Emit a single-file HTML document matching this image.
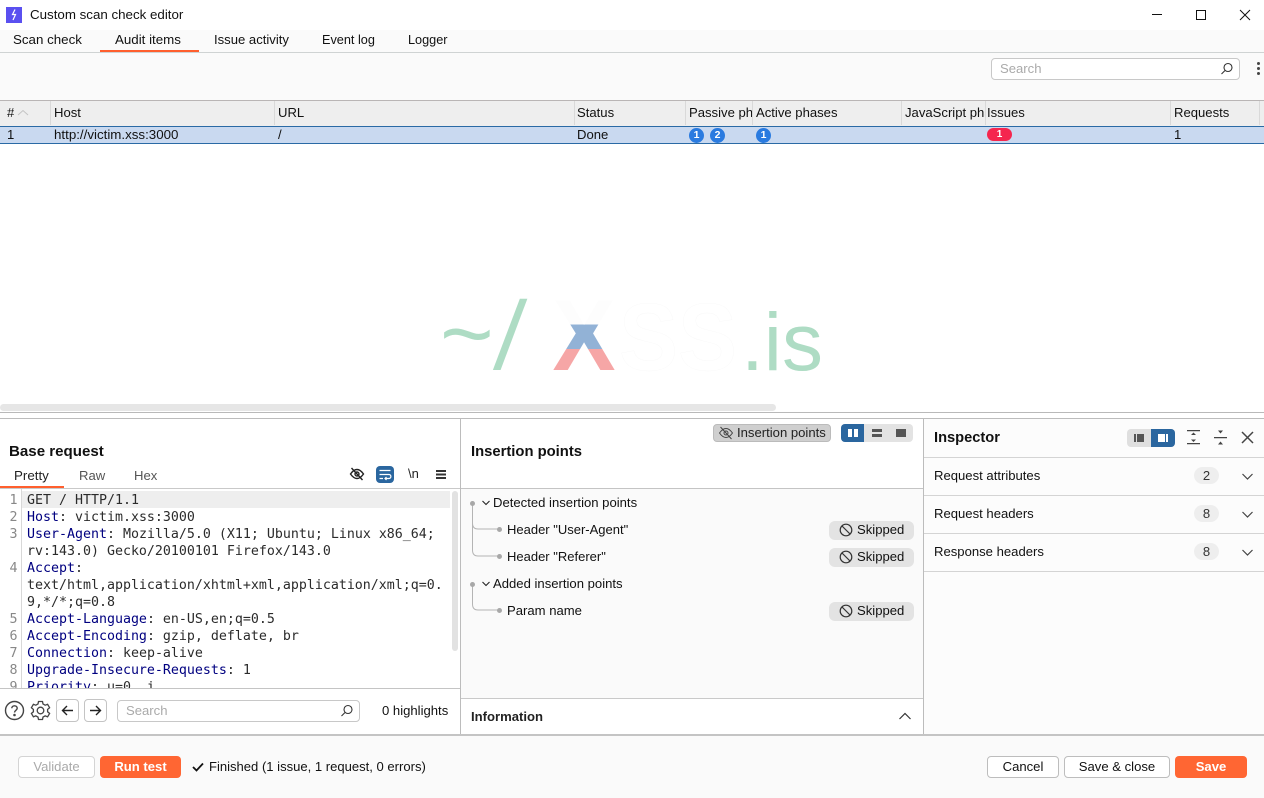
<!DOCTYPE html>
<html><head><meta charset="utf-8"><style>
html,body{margin:0;padding:0;width:1264px;height:798px;overflow:hidden;background:#fff}
body{position:relative;font-family:"Liberation Sans",sans-serif;font-size:13.1px;color:#111}
.a{position:absolute}
.t{position:absolute;white-space:nowrap;line-height:16px}
.r{position:absolute}
.m{position:absolute;white-space:pre;font-family:"DejaVu Sans Mono",monospace;font-size:13.3px;line-height:17px;color:#2b2b2b;left:27px;letter-spacing:-.01px}
.m b{font-weight:normal;color:#000080}
.n{position:absolute;left:0;width:17.500px;text-align:right;font-family:"DejaVu Sans Mono",monospace;font-size:13.33px;line-height:17px;color:#888}
.h{position:absolute;top:105px;white-space:nowrap;line-height:16px;overflow:hidden}
.sep{position:absolute;top:101px;width:1px;height:24px;background:#d9d9d9}
.dot{position:absolute;width:15px;height:15px;border-radius:50%;background:#2a7be0;color:#fff;font-size:10.5px;font-weight:bold;text-align:center;line-height:15px;top:128px}
.btn{position:absolute;box-sizing:border-box;border:1px solid #bdbdbd;border-radius:4px;background:#fff;text-align:center;height:22px;line-height:20px;top:756px}
.or{background:#ff6633;border:0;color:#fff;font-weight:bold;line-height:22px}
.sk{position:absolute;left:829px;width:85px;height:19px;border-radius:6px;background:#e3e3e3}
.sk span{position:absolute;left:28px;top:1px;line-height:16px}
.sk svg{position:absolute;left:10px;top:2px}
.dt{position:absolute;width:5px;height:5px;border-radius:50%;background:#a8a8a8}
.pill{position:absolute;left:1194px;width:25px;height:17px;border-radius:9px;background:#eeeeee;text-align:center;line-height:17px;color:#333}
</style></head><body>
<!-- title bar -->
<div class="r" style="left:6px;top:7px;width:16px;height:16px;background:#5a50f0"></div>
<svg class="a" style="left:6px;top:7px" width="16" height="16"><path d="M9 2.500L6.500 7.500H9.500L7 13" fill="none" stroke="#fff" stroke-width="1.200"/></svg>
<div class="t" style="left:30px;top:7px;font-size:13.33px">Custom scan check editor</div>
<svg class="a" style="left:1150px;top:8px" width="104" height="14" fill="none" stroke="#111" stroke-width="1"><path d="M2 6.500H12"/><rect x="46.500" y="2.500" width="9" height="9"/><path d="M90 2L100 12M100 2L90 12"/></svg>
<!-- tabs -->
<div class="r" style="left:0;top:30px;width:1264px;height:22px;background:#fafafa"></div>
<div class="r" style="left:0;top:52px;width:1264px;height:1px;background:#cfd3d3"></div>
<div class="t" style="left:13px;top:32px;font-size:13.33px">Scan check</div>
<div class="t" style="left:115px;top:32px;font-size:13.33px">Audit items</div>
<div class="t" style="left:214px;top:32px">Issue activity</div>
<div class="t" style="left:322px;top:32px;font-size:12.700px">Event log</div>
<div class="t" style="left:408px;top:32px;font-size:12.700px">Logger</div>
<div class="r" style="left:100px;top:50px;width:99px;height:2px;background:#ff5f2e"></div>
<!-- toolbar -->
<div class="r" style="left:0;top:53px;width:1264px;height:47px;background:#fafafa"></div>
<div class="r" style="left:991px;top:58px;width:249px;height:22px;box-sizing:border-box;border:1px solid #c8c8c8;border-radius:4px;background:#fff"></div>
<div class="t" style="left:1000px;top:61px;color:#aaa">Search</div>
<svg class="a" style="left:1219px;top:61px" width="16" height="16" fill="none" stroke="#333" stroke-width="1.100"><circle cx="9" cy="6.500" r="4"/><path d="M6 9.500L2.500 13"/></svg>
<div class="r" style="left:1257px;top:62px;width:3px;height:3px;border-radius:2px;background:#444;box-shadow:0 5px 0 #444,0 10px 0 #444"></div>
<!-- table header -->
<div class="r" style="left:0;top:100px;width:1264px;height:26px;box-sizing:border-box;background:#eeeeee;border-top:1px solid #b9b5b5"></div>
<div class="sep" style="left:50px"></div><div class="sep" style="left:274px"></div><div class="sep" style="left:574px"></div><div class="sep" style="left:685px"></div><div class="sep" style="left:752px"></div><div class="sep" style="left:901px"></div><div class="sep" style="left:985px"></div><div class="sep" style="left:1170px"></div><div class="sep" style="left:1259px"></div>
<div class="h" style="left:7px">#</div>
<svg class="a" style="left:17px;top:109px" width="12" height="8" fill="none" stroke="#c4c4c4" stroke-width="1"><path d="M1 6L6 1.500L11 6"/></svg>
<div class="h" style="left:54px">Host</div>
<div class="h" style="left:278px">URL</div>
<div class="h" style="left:577px">Status</div>
<div class="h" style="left:689px;width:63px">Passive phases</div>
<div class="h" style="left:756px">Active phases</div>
<div class="h" style="left:905px;width:80px">JavaScript phases</div>
<div class="h" style="left:987px">Issues</div>
<div class="h" style="left:1174px">Requests</div>
<!-- row -->
<div class="r" style="left:0;top:126px;width:1264px;height:18px;box-sizing:border-box;background:#c9d9f0;border-top:1px solid #2a6aa5;border-bottom:1px solid #2a6aa5"></div>
<div class="t" style="left:7px;top:127px">1</div>
<div class="t" style="left:54px;top:127px;font-size:13.33px">http://victim.xss:3000</div>
<div class="t" style="left:278px;top:127px">/</div>
<div class="t" style="left:577px;top:127px">Done</div>
<div class="dot" style="left:689px">1</div><div class="dot" style="left:710px">2</div><div class="dot" style="left:756px">1</div>
<div class="r" style="left:987px;top:128px;width:25px;height:13px;border-radius:7px;background:#f5264e;color:#fff;font-size:10px;font-weight:bold;text-align:center;line-height:13px">1</div>
<div class="t" style="left:1174px;top:127px">1</div>
<!-- logo -->
<svg class="a" style="left:420px;top:280px" width="420" height="110">
<defs><linearGradient id="g" gradientUnits="userSpaceOnUse" x1="0" y1="20" x2="0" y2="90">
<stop offset="0" stop-color="#fdfdfd"/><stop offset=".347" stop-color="#fdfdfd"/><stop offset=".347" stop-color="#92b2d6"/><stop offset=".7" stop-color="#92b2d6"/><stop offset=".7" stop-color="#f6a6a6"/><stop offset="1" stop-color="#f6a6a6"/></linearGradient></defs>
<text x="20" y="85" font-family="Liberation Sans" font-size="92" fill="#aedcc4">~</text>
<text transform="translate(73,89) skewX(-6)" font-family="Liberation Sans" font-size="97" fill="#aedcc4">/</text>
<text x="132.500" y="90" font-family="Liberation Sans" font-weight="bold" font-size="101" fill="url(#g)" textLength="63" lengthAdjust="spacingAndGlyphs">X</text>
<text x="199" y="90" font-family="Liberation Sans" font-weight="bold" font-size="96" fill="#fff" stroke="#f8f8f8" stroke-width=".4" textLength="118" lengthAdjust="spacingAndGlyphs">SS</text>
<text x="321" y="90" font-family="Liberation Sans" font-size="82" fill="#aedcc4">.is</text>
</svg>
<!-- hscroll -->
<div class="r" style="left:0;top:404px;width:776px;height:7px;border-radius:4px;background:#e6e6e6"></div>
<div class="r" style="left:0;top:412px;width:1264px;height:1px;background:#b9b9b9"></div>
<div class="r" style="left:0;top:418px;width:1264px;height:1px;background:#bcbcbc"></div>
<!-- left panel -->
<div class="t" style="left:9px;top:444px;font-weight:bold;font-size:15.100px">Base request</div>
<div class="t" style="left:14px;top:468px;color:#222;font-size:13.33px">Pretty</div>
<div class="t" style="left:79px;top:468px;color:#555">Raw</div>
<div class="t" style="left:134px;top:468px;color:#555">Hex</div>
<div class="r" style="left:0;top:486px;width:64px;height:2px;background:#ff5f2e"></div>
<div class="r" style="left:0;top:488px;width:460px;height:1px;background:#c9c9c9"></div>
<svg class="a" style="left:349px;top:466px" width="16" height="16" fill="none" stroke="#222" stroke-width="1.400"><path d="M1.500 8C4 4.500 6 3.500 8 3.500S12 4.500 14.500 8C12 11.500 10 12.500 8 12.500S4 11.500 1.500 8Z"/><circle cx="8" cy="8" r="2"/><path d="M2.500 2L13.500 14"/></svg>
<div class="r" style="left:376px;top:466px;width:18px;height:17px;border-radius:4px;background:#2a669f"></div>
<svg class="a" style="left:376px;top:466px" width="18" height="17" fill="none" stroke="#fff" stroke-width="1.200"><path d="M3.500 4.500H14.500M3.500 8.500H13C15.500 8.500 15.500 12.500 13 12.500H9M10.500 11L9 12.500L10.500 14M3.500 12.500H7"/></svg>
<div class="t" style="left:408px;top:466px;font-size:13px;color:#222">\n</div>
<div class="r" style="left:436px;top:470px;width:10px;height:2px;background:#333;box-shadow:0 3.500px 0 #333,0 7px 0 #333"></div>
<!-- editor -->
<div class="r" style="left:0;top:489px;width:460px;height:199px;overflow:hidden">
<div class="r" style="left:21px;top:0;width:1px;height:199px;background:#d8d8d8"></div>
<div class="r" style="left:22px;top:2px;width:428px;height:17px;background:#eeeeee"></div>
<div class="r" style="left:452px;top:2px;width:6px;height:160px;border-radius:3px;background:#e2e2e2"></div>
<div class="n" style="top:3px">1</div><div class="n" style="top:20px">2</div><div class="n" style="top:37px">3</div><div class="n" style="top:71px">4</div><div class="n" style="top:122px">5</div><div class="n" style="top:139px">6</div><div class="n" style="top:156px">7</div><div class="n" style="top:173px">8</div><div class="n" style="top:190px">9</div>
<div class="m" style="top:3px">GET / HTTP/1.1</div>
<div class="m" style="top:20px"><b>Host</b>: victim.xss:3000</div>
<div class="m" style="top:37px"><b>User-Agent</b>: Mozilla/5.0 (X11; Ubuntu; Linux x86_64;</div>
<div class="m" style="top:54px">rv:143.0) Gecko/20100101 Firefox/143.0</div>
<div class="m" style="top:71px"><b>Accept</b>:</div>
<div class="m" style="top:88px">text/html,application/xhtml+xml,application/xml;q=0.</div>
<div class="m" style="top:105px">9,*/*;q=0.8</div>
<div class="m" style="top:122px"><b>Accept-Language</b>: en-US,en;q=0.5</div>
<div class="m" style="top:139px"><b>Accept-Encoding</b>: gzip, deflate, br</div>
<div class="m" style="top:156px"><b>Connection</b>: keep-alive</div>
<div class="m" style="top:173px"><b>Upgrade-Insecure-Requests</b>: 1</div>
<div class="m" style="top:190px"><b>Priority</b>: u=0, i</div>
</div>
<div class="r" style="left:0;top:688px;width:460px;height:1px;background:#c4c4c4"></div>
<svg class="a" style="left:4px;top:700px" width="21" height="21" fill="none" stroke="#444" stroke-width="1.400"><circle cx="10.500" cy="10.500" r="9"/><path d="M7.800 8.300C7.800 5 13.200 5 13.200 8.300C13.200 10.300 10.500 10.300 10.500 12.500"/><circle cx="10.500" cy="15" r=".6" fill="#444"/></svg>
<svg class="a" style="left:30px;top:700px" width="21" height="21" fill="none" stroke="#444" stroke-width="1.300"><path d="M8.500 1.500H12.500L13 4L15.200 5.200L17.600 4.300L19.600 7.700L17.600 9.400V11.800L19.600 13.400L17.600 16.800L15.200 15.900L13 17.100L12.500 19.500H8.500L8 17.100L5.800 15.900L3.400 16.800L1.400 13.400L3.400 11.800V9.400L1.400 7.700L3.400 4.300L5.800 5.200L8 4Z"/><circle cx="10.500" cy="10.500" r="3.300"/></svg>
<div class="r" style="left:56px;top:699px;width:23px;height:23px;box-sizing:border-box;border:1px solid #c4c4c4;border-radius:4px"></div>
<svg class="a" style="left:56px;top:699px" width="23" height="23" fill="none" stroke="#222" stroke-width="1.400"><path d="M17 11.500H6.500M11 7L6.500 11.500L11 16"/></svg>
<div class="r" style="left:84px;top:699px;width:23px;height:23px;box-sizing:border-box;border:1px solid #c4c4c4;border-radius:4px"></div>
<svg class="a" style="left:84px;top:699px" width="23" height="23" fill="none" stroke="#222" stroke-width="1.400"><path d="M6 11.500H16.500M12 7L16.500 11.500L12 16"/></svg>
<div class="r" style="left:117px;top:700px;width:243px;height:22px;box-sizing:border-box;border:1px solid #c8c8c8;border-radius:4px;background:#fff"></div>
<div class="t" style="left:126px;top:703px;color:#aaa">Search</div>
<svg class="a" style="left:339px;top:703px" width="16" height="16" fill="none" stroke="#333" stroke-width="1.100"><circle cx="9" cy="6.500" r="4"/><path d="M6 9.500L2.500 13"/></svg>
<div class="t" style="left:382px;top:703px">0 highlights</div>
<!-- mid panel -->
<div class="r" style="left:460px;top:418px;width:1px;height:317px;background:#bcbcbc"></div>
<div class="r" style="left:923px;top:418px;width:1px;height:317px;background:#bcbcbc"></div>
<div class="t" style="left:471px;top:444px;font-weight:bold;font-size:14.800px">Insertion points</div>
<div class="r" style="left:713px;top:424px;width:118px;height:18px;box-sizing:border-box;border:1px solid #bbb;border-radius:4px;background:#cfcfcf"></div>
<svg class="a" style="left:718px;top:425px" width="16" height="16" fill="none" stroke="#444" stroke-width="1"><path d="M1.500 8C4 4.500 6 3.500 8 3.500S12 4.500 14.500 8C12 11.500 10 12.500 8 12.500S4 11.500 1.500 8Z"/><circle cx="8" cy="8" r="2"/><path d="M2.500 2L13.500 14"/></svg>
<div class="t" style="left:737px;top:425px;color:#222">Insertion points</div>
<div class="r" style="left:841px;top:424px;width:72px;height:18px;border-radius:4px;background:#e3e3e3;overflow:hidden"><div class="r" style="left:0;top:0;width:23px;height:18px;background:#2a669f"></div>
<div class="r" style="left:7px;top:5px;width:4px;height:8px;background:#fff"></div><div class="r" style="left:13px;top:5px;width:4px;height:8px;background:#fff"></div>
<div class="r" style="left:31px;top:5px;width:10px;height:3px;background:#555"></div><div class="r" style="left:31px;top:10px;width:10px;height:3px;background:#555"></div>
<div class="r" style="left:55px;top:5px;width:10px;height:8px;background:#555"></div></div>
<div class="r" style="left:461px;top:488px;width:462px;height:1px;background:#c4c4c4"></div>
<div class="r" style="left:461px;top:489px;width:462px;height:209px;background:#fafafa"></div>
<svg class="a" style="left:468px;top:498px" width="36" height="120" fill="none" stroke="#b4b4b4" stroke-width="1"><path d="M4.500 5V25Q4.500 31 10 31H30M4.500 25V52Q4.500 58 10 58H30M4.500 86V106Q4.500 112 10 112H30"/></svg>
<div class="dt" style="left:470px;top:501px"></div><div class="dt" style="left:470px;top:582px"></div>
<div class="dt" style="left:497px;top:527px"></div><div class="dt" style="left:497px;top:554px"></div><div class="dt" style="left:497px;top:608px"></div>
<svg class="a" style="left:481px;top:499px" width="10" height="8" fill="none" stroke="#222" stroke-width="1.100"><path d="M1.500 2L5 5.500L8.500 2"/></svg>
<svg class="a" style="left:481px;top:580px" width="10" height="8" fill="none" stroke="#222" stroke-width="1.100"><path d="M1.500 2L5 5.500L8.500 2"/></svg>
<div class="t" style="left:493px;top:495px">Detected insertion points</div>
<div class="t" style="left:507px;top:522px;font-size:13px">Header "User-Agent"</div>
<div class="t" style="left:507px;top:549px;font-size:13px">Header "Referer"</div>
<div class="t" style="left:493px;top:576px">Added insertion points</div>
<div class="t" style="left:507px;top:603px">Param name</div>
<div class="sk" style="top:521px"><svg width="14" height="14" fill="none" stroke="#333" stroke-width="1.200"><circle cx="7" cy="7" r="5.800"/><path d="M3 3L11 11"/></svg><span>Skipped</span></div>
<div class="sk" style="top:548px"><svg width="14" height="14" fill="none" stroke="#333" stroke-width="1.200"><circle cx="7" cy="7" r="5.800"/><path d="M3 3L11 11"/></svg><span>Skipped</span></div>
<div class="sk" style="top:602px"><svg width="14" height="14" fill="none" stroke="#333" stroke-width="1.200"><circle cx="7" cy="7" r="5.800"/><path d="M3 3L11 11"/></svg><span>Skipped</span></div>
<div class="r" style="left:461px;top:698px;width:462px;height:1px;background:#c9c9c9"></div>
<div class="t" style="left:471px;top:709px;font-weight:bold;color:#222">Information</div>
<svg class="a" style="left:898px;top:711px" width="14" height="10" fill="none" stroke="#333" stroke-width="1.200"><path d="M1.500 8L7 2.500L12.500 8"/></svg>
<!-- inspector -->
<div class="r" style="left:924px;top:419px;width:340px;height:316px;background:#fcfcfc"></div>
<div class="t" style="left:934px;top:430px;font-weight:bold;font-size:14.67px">Inspector</div>
<div class="r" style="left:1127px;top:429px;width:48px;height:18px;border-radius:4px;background:#dfdfdf;overflow:hidden"><div class="r" style="left:24px;top:0;width:24px;height:18px;background:#2a669f"></div>
<div class="r" style="left:7px;top:5px;width:2px;height:8px;background:#555"></div><div class="r" style="left:10px;top:5px;width:7px;height:8px;background:#555"></div>
<div class="r" style="left:31px;top:5px;width:7px;height:8px;background:#fff"></div><div class="r" style="left:39px;top:5px;width:2px;height:8px;background:#fff"></div></div>
<svg class="a" style="left:1186px;top:429px" width="16" height="18" fill="#444" stroke="none"><path d="M1 1H14V2.300H1ZM1 14H14V15.300H1ZM5 6L7.500 3.500L10 6ZM5 10.500L7.500 13L10 10.500Z"/></svg>
<svg class="a" style="left:1213px;top:429px" width="16" height="18" fill="#444" stroke="none"><path d="M1 8H14V9.300H1ZM5 1.500L7.500 4.500L10 1.500ZM5 15.500L7.500 12.500L10 15.500Z"/></svg>
<svg class="a" style="left:1241px;top:431px" width="14" height="14" fill="none" stroke="#444" stroke-width="1.500"><path d="M1 1L12 12M12 1L1 12"/></svg>
<div class="r" style="left:924px;top:457px;width:340px;height:1px;background:#d4d4d4"></div>
<div class="r" style="left:924px;top:495px;width:340px;height:1px;background:#d4d4d4"></div>
<div class="r" style="left:924px;top:533px;width:340px;height:1px;background:#d4d4d4"></div>
<div class="r" style="left:924px;top:571px;width:340px;height:1px;background:#d4d4d4"></div>
<div class="t" style="left:934px;top:468px">Request attributes</div>
<div class="t" style="left:934px;top:506px">Request headers</div>
<div class="t" style="left:934px;top:544px">Response headers</div>
<div class="pill" style="top:467px">2</div><div class="pill" style="top:505px">8</div><div class="pill" style="top:543px">8</div>
<svg class="a" style="left:1241px;top:472px" width="14" height="10" fill="none" stroke="#444" stroke-width="1.200"><path d="M1.500 2L6.500 7L11.500 2"/></svg>
<svg class="a" style="left:1241px;top:510px" width="14" height="10" fill="none" stroke="#444" stroke-width="1.200"><path d="M1.500 2L6.500 7L11.500 2"/></svg>
<svg class="a" style="left:1241px;top:548px" width="14" height="10" fill="none" stroke="#444" stroke-width="1.200"><path d="M1.500 2L6.500 7L11.500 2"/></svg>
<!-- footer -->
<div class="r" style="left:0;top:734px;width:1264px;height:2px;background:#c4c4c4"></div>
<div class="r" style="left:0;top:736px;width:1264px;height:62px;background:#fafafa"></div>
<div class="btn" style="left:18px;width:77px;color:#aaa;border-color:#d4d4d4">Validate</div>
<div class="btn or" style="left:100px;width:81px">Run test</div>
<svg class="a" style="left:191px;top:760px" width="14" height="14" fill="none" stroke="#111" stroke-width="1.800"><path d="M2 7L5.500 10.500L12 3.500"/></svg>
<div class="t" style="left:209px;top:759px;font-size:13.05px">Finished (1 issue, 1 request, 0 errors)</div>
<div class="btn" style="left:987px;width:72px">Cancel</div>
<div class="btn" style="left:1064px;width:106px">Save &amp; close</div>
<div class="btn or" style="left:1175px;width:72px">Save</div>
</body></html>
